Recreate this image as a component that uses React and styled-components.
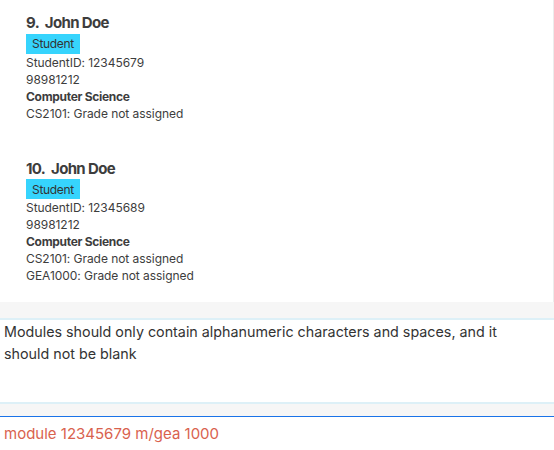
import React from "react";
import styled, { createGlobalStyle } from "styled-components";

const Global = createGlobalStyle`
  html, body { margin: 0; padding: 0; background: #ffffff; }
  body { font-family: Inter, "Noto Sans", sans-serif; color: #3d3d3d; }
  * { box-sizing: border-box; }
`;

const Page = styled.div`
  width: 554px;
  height: 450px;
  display: flex;
  flex-direction: column;
  overflow: hidden;
  background: #fff;
`;

const List = styled.div`
  height: 302px;
  width: 554px;
  border-right: 1px solid #ececec;
  overflow: hidden;
  display: flex;
  flex-direction: column;
  flex-shrink: 0;
`;

const Card = styled.div`
  padding: 13px 0 24px 26px;
  display: flex;
  flex-direction: column;
  align-items: flex-start;
  flex-shrink: 0;
`;

const Name = styled.div`
  font-size: 15px;
  line-height: 20px;
  font-weight: 700;
  letter-spacing: -0.65px;
  color: #3d3d3d;
`;

const Badge = styled.span`
  display: inline-flex;
  align-items: center;
  height: 20px;
  padding: 0 6px;
  background: #36d4fd;
  color: #333;
  font-size: 12px;
  letter-spacing: -0.3px;
  margin-top: 0.5px;
`;

const Line = styled.div`
  font-size: 12px;
  line-height: 17px;
  letter-spacing: ${(p) => (p.$bold ? "-0.3px" : "-0.05px")};
  font-weight: ${(p) => (p.$bold ? 700 : 400)};
  color: #3d3d3d;
`;

const Band = styled.div`
  height: ${(p) => p.$h}px;
  background: #f6f6f6;
  flex-shrink: 0;
  border-bottom: ${(p) => p.$line || "none"};
`;

const Result = styled.div`
  height: 84px;
  padding: 1px 8px 0 4px;
  font-size: 14.3px;
  line-height: 22px;
  color: #333;
  border-bottom: 2px solid #ddf0f7;
  flex-shrink: 0;
`;

const Command = styled.div`
  padding: 6px 4px 0 4px;
  font-size: 15px;
  line-height: 22px;
  color: #d9624e;
`;

const people = [
  {
    n: 9,
    id: "12345679",
    phone: "98981212",
    major: "Computer Science",
    mods: ["CS2101: Grade not assigned"],
  },
  {
    n: 10,
    id: "12345689",
    phone: "98981212",
    major: "Computer Science",
    mods: ["CS2101: Grade not assigned", "GEA1000: Grade not assigned"],
  },
];

export default function App() {
  return (
    <Page>
      <Global />
      <List>
        {people.map((p) => (
          <Card key={p.n}>
            <Name>
              {p.n}.&nbsp; John Doe
            </Name>
            <Badge>Student</Badge>
            <Line>StudentID: {p.id}</Line>
            <Line>{p.phone}</Line>
            <Line $bold>{p.major}</Line>
            {p.mods.map((m) => (
              <Line key={m}>{m}</Line>
            ))}
          </Card>
        ))}
      </List>
      <Band $h={18} $line="2px solid #ddf0f7" />
      <Result>
        Modules should only contain alphanumeric characters and spaces, and it
        should not be blank
      </Result>
      <Band $h={13} $line="1.5px solid #1a73e8" />
      <Command>module 12345679 m/gea 1000</Command>
    </Page>
  );
}
